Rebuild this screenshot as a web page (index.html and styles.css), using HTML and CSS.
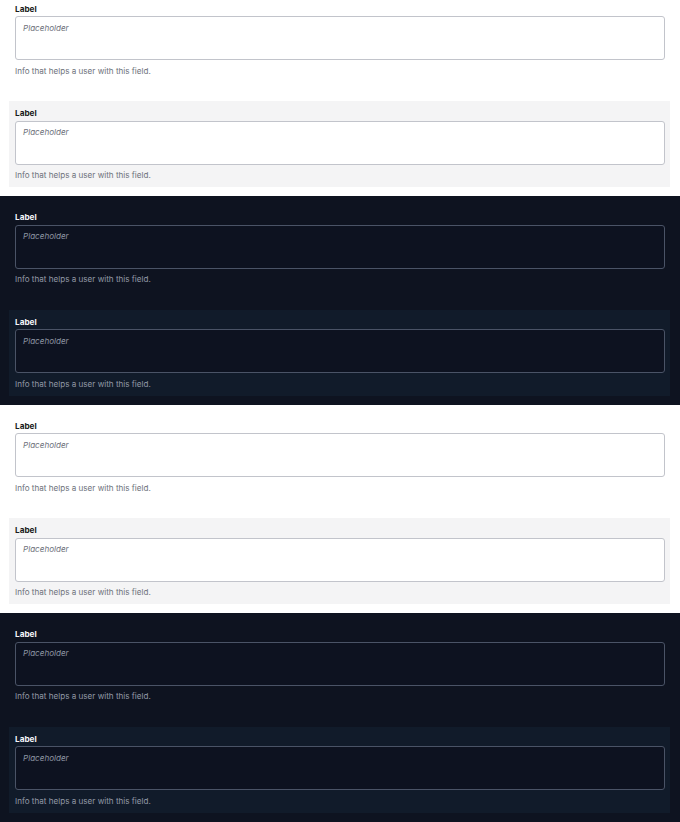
FILE: index.html
```html
<!DOCTYPE html>
<html lang="en">
<head>
<meta charset="utf-8">
<title>Text area field</title>
<link rel="stylesheet" href="styles.css">
</head>
<body>
<div class="page">
  <section class="theme theme-light">
    <div class="field">
      <label class="label">Label</label>
      <textarea class="input" placeholder="Placeholder"></textarea>
      <div class="helper">Info that helps a user with this field.</div>
    </div>
    <div class="layer">
      <div class="field field-in-layer">
        <label class="label">Label</label>
        <textarea class="input" placeholder="Placeholder"></textarea>
        <div class="helper">Info that helps a user with this field.</div>
      </div>
    </div>
  </section>
  <section class="theme theme-dark">
    <div class="field">
      <label class="label">Label</label>
      <textarea class="input" placeholder="Placeholder"></textarea>
      <div class="helper">Info that helps a user with this field.</div>
    </div>
    <div class="layer">
      <div class="field field-in-layer">
        <label class="label">Label</label>
        <textarea class="input" placeholder="Placeholder"></textarea>
        <div class="helper">Info that helps a user with this field.</div>
      </div>
    </div>
  </section>
  <section class="theme theme-light">
    <div class="field">
      <label class="label">Label</label>
      <textarea class="input" placeholder="Placeholder"></textarea>
      <div class="helper">Info that helps a user with this field.</div>
    </div>
    <div class="layer">
      <div class="field field-in-layer">
        <label class="label">Label</label>
        <textarea class="input" placeholder="Placeholder"></textarea>
        <div class="helper">Info that helps a user with this field.</div>
      </div>
    </div>
  </section>
  <section class="theme theme-dark">
    <div class="field">
      <label class="label">Label</label>
      <textarea class="input" placeholder="Placeholder"></textarea>
      <div class="helper">Info that helps a user with this field.</div>
    </div>
    <div class="layer">
      <div class="field field-in-layer">
        <label class="label">Label</label>
        <textarea class="input" placeholder="Placeholder"></textarea>
        <div class="helper">Info that helps a user with this field.</div>
      </div>
    </div>
  </section>
</div>
</body>
</html>
```
FILE: styles.css
```css
html, body {
  margin: 0;
  padding: 0;
  overflow: hidden;
}
body {
  font-family: Inter, "Noto Sans", "Liberation Sans", sans-serif;
  background: #0e1320;
}
.page {
  margin-top: -12.5px;
}
.theme {
  height: 208.5px;
  box-sizing: border-box;
  padding: 16px 10px 9px 9px;
  display: flex;
  flex-direction: column;
}
.field {
  display: flex;
  flex-direction: column;
  padding: 0 5px 0 6px;
}
.field-in-layer {
  padding: 0;
}
.layer {
  margin-top: 24.5px;
  padding: 7px 5px 6px 6px;
}
.label {
  font-size: 8.2px;
  line-height: 11px;
  font-weight: 700;
  margin-bottom: 1.5px;
}
.input {
  display: block;
  box-sizing: border-box;
  width: 100%;
  height: 44px;
  margin: 0;
  padding: 5.5px 7px 4px;
  border-radius: 3px;
  border: 1px solid;
  resize: none;
  font-family: inherit;
  font-size: 8.1px;
  line-height: 11px;
  outline: none;
}
.input::placeholder {
  font-style: italic;
  opacity: 1;
}
.helper {
  margin-top: 5.5px;
  font-size: 8.1px;
  line-height: 11px;
}

/* light theme */
.theme-light {
  background: #ffffff;
}
.theme-light .layer {
  background: #f4f4f5;
}
.theme-light .label {
  color: #1b1c20;
}
.theme-light .input {
  background: #ffffff;
  border-color: #c2c4cb;
}
.theme-light .input::placeholder {
  color: #6d717b;
}
.theme-light .helper {
  color: #6e727b;
}

/* dark theme */
.theme-dark {
  background: #0e1320;
}
.theme-dark .layer {
  background: #111b2a;
}
.theme-dark .label {
  color: #f3f5f8;
}
.theme-dark .input {
  background: #0d1220;
  border-color: #4a5366;
}
.theme-dark .input::placeholder {
  color: #8e95a3;
}
.theme-dark .helper {
  color: #9299a6;
}
```
